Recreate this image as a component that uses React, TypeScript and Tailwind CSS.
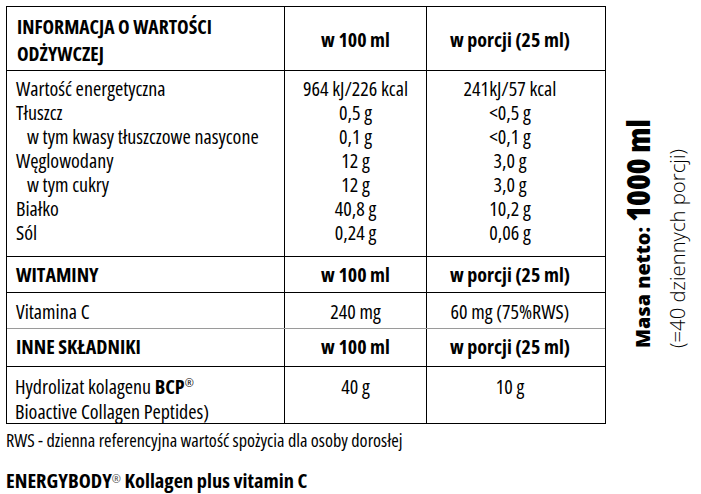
const cols = "grid grid-cols-[278px_142px_178px]"

type Row = {
    label: string
    per100: string
    portion: string
    indent?: boolean
}

const nutrition: Row[] = [
    { label: "Wartość energetyczna", per100: "964 kJ/226 kcal", portion: "241kJ/57 kcal" },
    { label: "Tłuszcz", per100: "0,5 g", portion: "<0,5 g" },
    { label: "w tym kwasy tłuszczowe nasycone", per100: "0,1 g", portion: "<0,1 g", indent: true },
    { label: "Węglowodany", per100: "12 g", portion: "3,0 g" },
    { label: "w tym cukry", per100: "12 g", portion: "3,0 g", indent: true },
    { label: "Białko", per100: "40,8 g", portion: "10,2 g" },
    { label: "Sól", per100: "0,24 g", portion: "0,06 g" },
]

function SectionHead({ title, className }: { title: string, className?: string }) {
    return (
        <div className={`${cols} border-t text-[20px] font-bold leading-[24px] ${className ?? ""}`}>
            <div className="border-r border-black pl-[9px] pt-[6px]">{title}</div>
            <div className="border-r border-black pt-[6px] text-center">w 100 ml</div>
            <div className="pt-[6px] pr-[12px] text-center">w porcji (25 ml)</div>
        </div>
    )
}

export default function App() {
    return (
        <div className="flex h-[494px] w-[701px] bg-white font-['Open_Sans',sans-serif] text-black font-stretch-condensed">
            <div className="flex flex-col pl-[6px] pt-[6px]">
                <div className="w-[600px] border border-black">
                    {/* header */}
                    <div className={`${cols} h-[63px] font-bold`}>
                        <div className="border-r border-black pl-[10px] pt-[7px] text-[19.6px] leading-[26.5px]">
                            INFORMACJA O WARTOŚCI
                            <br />
                            ODŻYWCZEJ
                        </div>
                        <div className="border-r border-black pt-[21px] text-center text-[20px] leading-[24px]">w 100 ml</div>
                        <div className="pt-[21px] pr-[12px] text-center text-[20px] leading-[24px]">w porcji (25 ml)</div>
                    </div>

                    {/* nutrition values */}
                    <div className={`${cols} border-t border-black text-[20px] leading-[24px]`}>
                        <div className="border-r border-black pt-[6px] pb-[11px]">
                            {nutrition.map((r) => (
                                <div key={r.label} className={r.indent ? "pl-[20px]" : "pl-[9px]"}>{r.label}</div>
                            ))}
                        </div>
                        <div className="border-r border-black pt-[6px] pb-[11px] text-center">
                            {nutrition.map((r) => (
                                <div key={r.label}>{r.per100}</div>
                            ))}
                        </div>
                        <div className="pt-[6px] pb-[11px] pr-[12px] text-center">
                            {nutrition.map((r) => (
                                <div key={r.label}>{r.portion}</div>
                            ))}
                        </div>
                    </div>

                    <SectionHead title="WITAMINY" className="h-[36px] border-black" />
                    <div className={`${cols} h-[36px] border-t border-black text-[20px] leading-[24px]`}>
                        <div className="border-r border-black pl-[9px] pt-[7px]">Vitamina C</div>
                        <div className="border-r border-black pt-[7px] text-center">240 mg</div>
                        <div className="pt-[7px] pr-[12px] text-center">60 mg (75%RWS)</div>
                    </div>

                    <SectionHead title="INNE SKŁADNIKI" className="h-[38px] border-[#9a9a9a]" />
                    <div className={`${cols} h-[57px] border-t border-black text-[20px] leading-[24.5px]`}>
                        <div className="border-r border-black pl-[8px] pt-[8px]">
                            Hydrolizat kolagenu <b>BCP</b>
                            <sup className="top-[-0.6em] text-[11px]">®</sup>
                            <br />
                            Bioactive Collagen Peptides)
                        </div>
                        <div className="border-r border-black pt-[8px] text-center">40 g</div>
                        <div className="pt-[8px] pr-[12px] text-center">10 g</div>
                    </div>
                </div>

                <p className="mt-[6px] text-[18.2px] leading-[20px]">RWS - dzienna referencyjna wartość spożycia dla osoby dorosłej</p>
                <p className="mt-[18px] text-[20.4px] font-bold leading-[24px]">
                    ENERGYBODY<sup className="top-[-0.5em] text-[11px] font-normal text-[#444]">®</sup> Kollagen plus vitamin C
                </p>
            </div>

            {/* net weight, rotated */}
            <div className="ml-[12px] mt-[100px] h-[248px] w-[70px]">
                <div className="h-[70px] w-[248px] origin-top-left -rotate-90 translate-y-[248px] whitespace-nowrap">
                    <div className="flex items-baseline pt-[3.5px] font-extrabold leading-none">
                        <span className="text-[19.8px] font-stretch-[88%]">Masa netto:&nbsp;</span>
                        <span className="text-[32px] font-stretch-[79%]">1000 ml</span>
                    </div>
                    <div className="mt-[13.5px] text-[20.3px] font-light leading-none font-stretch-[95%]">(=40 dziennych porcji)</div>
                </div>
            </div>
        </div>
    )
}
